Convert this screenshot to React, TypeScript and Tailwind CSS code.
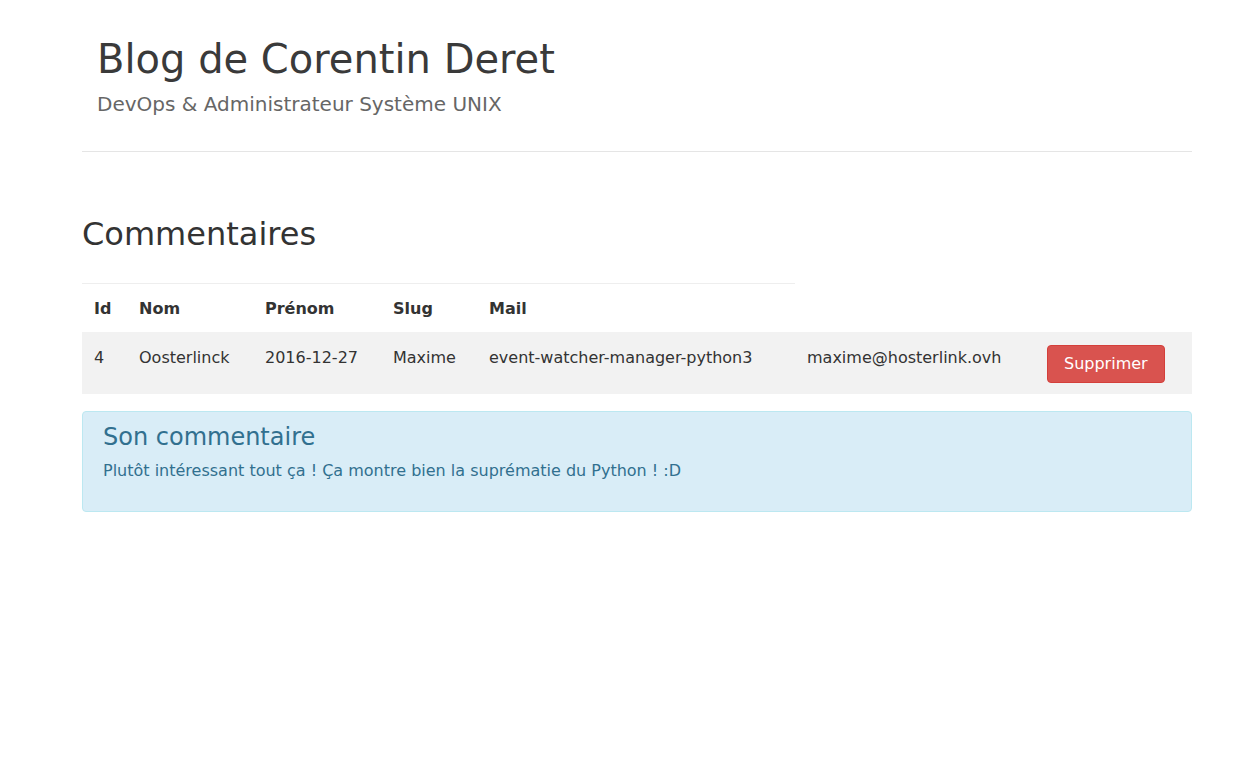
import React from "react";

const columns = [
  { label: "Id", width: "w-[45px]" },
  { label: "Nom", width: "w-[126px]" },
  { label: "Prénom", width: "w-[128px]" },
  { label: "Slug", width: "w-[96px]" },
  { label: "Mail", width: "w-[318px]" },
];

const comment = {
  id: 4,
  nom: "Oosterlinck",
  date: "2016-12-27",
  prenom: "Maxime",
  slug: "event-watcher-manager-python3",
  mail: "maxime@hosterlink.ovh",
  text: "Plutôt intéressant tout ça ! Ça montre bien la suprématie du Python ! :D",
};

const App = () => {
  return (
    <div
      className="min-h-screen bg-white text-[#333] text-[16px] leading-[24px]"
      style={{ fontFamily: '"DejaVu Sans", Verdana, sans-serif' }}
    >
      <div className="ml-[82px] w-[1110px]">
        {/* Header */}
        <header className="px-[15px] pt-[37px] pb-[32px]">
          <h1 className="text-[40px] leading-[44px] text-[#3a3a3a]">
            Blog de Corentin Deret
          </h1>
          <p className="mt-[8px] text-[20px] leading-[30px] text-[#666]">
            DevOps &amp; Administrateur Système UNIX
          </p>
        </header>
        <hr className="border-0 border-t border-[#e5e5e5]" />

        {/* Commentaires */}
        <h2 className="mt-[65px] text-[32px] leading-[35px] text-[#333]">
          Commentaires
        </h2>

        <table className="mt-[31px] w-[1110px] table-fixed border-collapse">
          <colgroup>
            <col className="w-[45px]" />
            <col className="w-[126px]" />
            <col className="w-[128px]" />
            <col className="w-[96px]" />
            <col className="w-[318px]" />
            <col className="w-[240px]" />
            <col className="w-[157px]" />
          </colgroup>
          <thead>
            <tr>
              {columns.map((col) => (
                <th
                  key={col.label}
                  className={`${col.width} border-t border-[#eee] px-[12px] pt-[13px] pb-[11px] text-left font-bold align-top`}
                >
                  {col.label}
                </th>
              ))}
              <th />
              <th />
            </tr>
          </thead>
          <tbody>
            <tr className="bg-[#f2f2f2]">
              <td className="px-[12px] pt-[14px] align-top">{comment.id}</td>
              <td className="px-[12px] pt-[14px] align-top">{comment.nom}</td>
              <td className="px-[12px] pt-[14px] align-top">{comment.date}</td>
              <td className="px-[12px] pt-[14px] align-top">{comment.prenom}</td>
              <td className="px-[12px] pt-[14px] align-top">{comment.slug}</td>
              <td className="px-[12px] pt-[14px] align-top">{comment.mail}</td>
              <td className="px-[12px] pt-[13px] pb-[11px] align-top">
                <button
                  type="button"
                  className="h-[38px] rounded-[4px] border border-[#d43f3a] bg-[#d9534f] px-[16px] text-[16px] text-white"
                >
                  Supprimer
                </button>
              </td>
            </tr>
          </tbody>
        </table>

        {/* Son commentaire */}
        <div className="mt-[17px] rounded-[4px] border border-[#bce8f1] bg-[#d9edf7] px-[20px] pt-[12px] pb-[28px] text-[#31708f]">
          <h3 className="text-[24px] leading-[26px]">Son commentaire</h3>
          <p className="mt-[9px]">{comment.text}</p>
        </div>
      </div>
    </div>
  );
};

export default App;
